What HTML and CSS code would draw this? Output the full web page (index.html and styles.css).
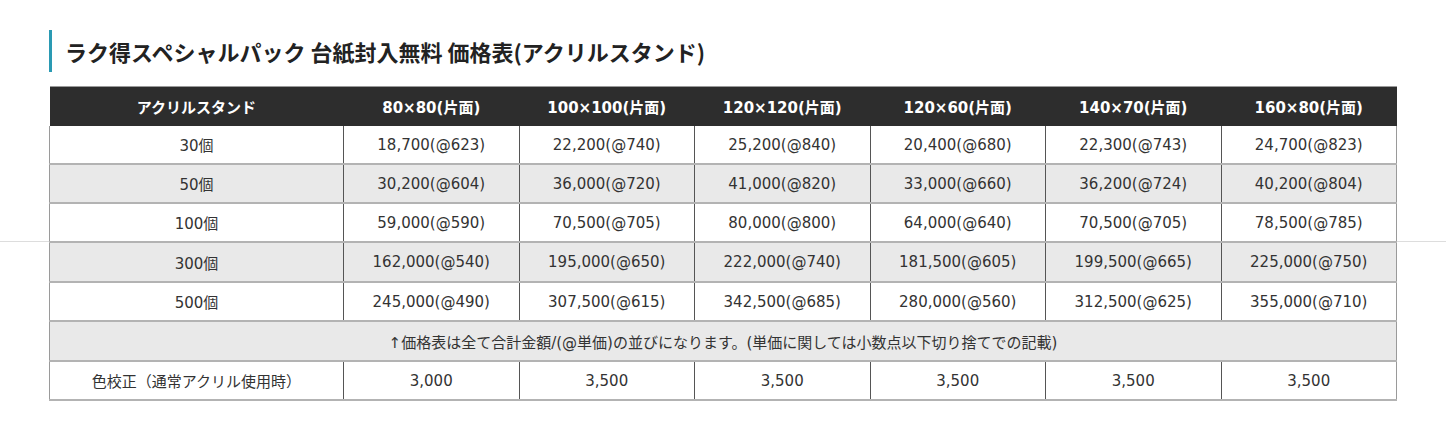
FILE: index.html
```html
<!DOCTYPE html>
<html lang="ja">
<head>
<meta charset="utf-8">
<title>価格表</title>
<link rel="stylesheet" href="styles.css">
</head>
<body>
<div class="page">
  <div class="rule"></div>
  <h2 class="title">ラク得スペシャルパック 台紙封入無料 価格表(アクリルスタンド)</h2>
  <table class="price">
    <colgroup>
      <col class="c0"><col class="cn"><col class="cn"><col class="cn"><col class="cn"><col class="cn"><col class="cn">
    </colgroup>
    <thead>
      <tr><th>アクリルスタンド</th><th>80×80(片面)</th><th>100×100(片面)</th><th>120×120(片面)</th><th>120×60(片面)</th><th>140×70(片面)</th><th>160×80(片面)</th></tr>
    </thead>
    <tbody>
      <tr><td>30個</td><td>18,700(@623)</td><td>22,200(@740)</td><td>25,200(@840)</td><td>20,400(@680)</td><td>22,300(@743)</td><td>24,700(@823)</td></tr>
      <tr class="alt"><td>50個</td><td>30,200(@604)</td><td>36,000(@720)</td><td>41,000(@820)</td><td>33,000(@660)</td><td>36,200(@724)</td><td>40,200(@804)</td></tr>
      <tr><td>100個</td><td>59,000(@590)</td><td>70,500(@705)</td><td>80,000(@800)</td><td>64,000(@640)</td><td>70,500(@705)</td><td>78,500(@785)</td></tr>
      <tr class="alt tall"><td>300個</td><td>162,000(@540)</td><td>195,000(@650)</td><td>222,000(@740)</td><td>181,500(@605)</td><td>199,500(@665)</td><td>225,000(@750)</td></tr>
      <tr><td>500個</td><td>245,000(@490)</td><td>307,500(@615)</td><td>342,500(@685)</td><td>280,000(@560)</td><td>312,500(@625)</td><td>355,000(@710)</td></tr>
      <tr class="alt tall"><td colspan="7">↑価格表は全て合計金額/(@単価)の並びになります。(単価に関しては小数点以下切り捨てでの記載)</td></tr>
      <tr><td>色校正（通常アクリル使用時）</td><td>3,000</td><td>3,500</td><td>3,500</td><td>3,500</td><td>3,500</td><td>3,500</td></tr>
    </tbody>
  </table>
</div>
</body>
</html>
```

FILE: styles.css
```css
html, body {
  margin: 0;
  padding: 0;
  background: #ffffff;
}
body {
  font-family: "DejaVu Sans", "Noto Sans CJK JP", sans-serif;
  color: #333333;
}
.page {
  position: relative;
  width: 1446px;
  height: 429px;
  padding: 30px 0 0 49px;
  box-sizing: border-box;
}
.rule {
  position: absolute;
  left: 0;
  right: 0;
  top: 241px;
  height: 1px;
  background: #dddddd;
  z-index: 0;
}
.title {
  margin: 0 0 14px 0;
  height: 42px;
  border-left: 3px solid #2a9ab3;
  padding-left: 13px;
  font-family: "Noto Sans CJK JP", sans-serif;
  font-weight: 700;
  font-size: 22px;
  line-height: 42px;
  color: #222222;
}
.price {
  position: relative;
  z-index: 1;
  width: 1348px;
  border-collapse: collapse;
  table-layout: fixed;
  background: #ffffff;
  font-size: 15px;
}
.c0 { width: 294px; }
.price th {
  background: #2d2d2d;
  color: #ffffff;
  font-weight: 700;
  height: 39px;
  padding: 0;
  text-align: center;
  border-top: 1px solid #9a9a9a;
  font-size: 15px;
}
.price td {
  height: 37px;
  padding: 0;
  text-align: center;
  border-left: 1px solid #555555;
  border-right: 1px solid #555555;
  border-bottom: 2px solid #b3b3b3;
}
.price tr.tall td {
  height: 38px;
}
.price tr.alt td {
  background: #e9e9e9;
}
.price td:first-child {
  border-left: 1px solid #9a9a9a;
}
.price td:last-child {
  border-right: 1px solid #9a9a9a;
}
```
